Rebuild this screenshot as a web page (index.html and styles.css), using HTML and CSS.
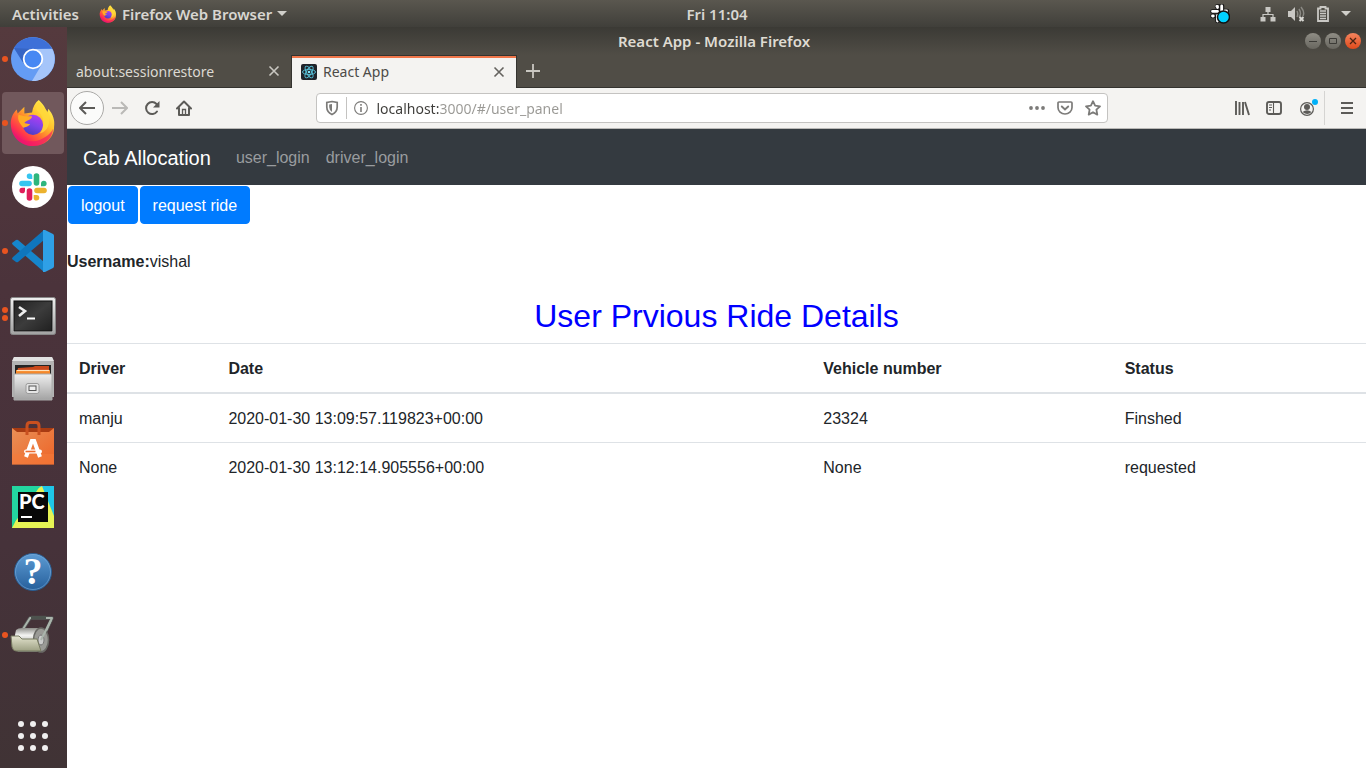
FILE: index.html
```
<!DOCTYPE html>
<html lang="en">
<head>
<meta charset="utf-8">
<meta name="viewport" content="width=device-width, initial-scale=1">
<title>React App</title>
<link rel="stylesheet" href="styles.css">
</head>
<body>
<svg class="defs" aria-hidden="true">
  <defs>
    <linearGradient id="flame" x1="0.85" y1="0.1" x2="0.2" y2="0.9"><stop offset="0" stop-color="#fff14f"/><stop offset=".35" stop-color="#ffc02b"/><stop offset=".62" stop-color="#ff7130"/><stop offset=".85" stop-color="#ff304f"/><stop offset="1" stop-color="#e3107a"/></linearGradient>
    <linearGradient id="globe" x1="0.7" y1="0" x2="0.3" y2="1"><stop offset="0" stop-color="#b33cf0"/><stop offset=".5" stop-color="#7a44e8"/><stop offset="1" stop-color="#4a3cc0"/></linearGradient>
    <linearGradient id="silver" x1="0" y1="0" x2="0" y2="1"><stop offset="0" stop-color="#efefef"/><stop offset="1" stop-color="#a2a2a2"/></linearGradient>
    <linearGradient id="screen" x1="0" y1="0" x2="1" y2="1"><stop offset="0" stop-color="#222"/><stop offset=".5" stop-color="#3c3c3c"/><stop offset="1" stop-color="#202020"/></linearGradient>
    <linearGradient id="bag" x1="0" y1="0" x2="1" y2="1"><stop offset="0" stop-color="#e99057"/><stop offset="1" stop-color="#ee6427"/></linearGradient>
    <linearGradient id="helpblue" x1="0" y1="0" x2="0" y2="1"><stop offset="0" stop-color="#5d9bd3"/><stop offset="1" stop-color="#265f9b"/></linearGradient>
    <linearGradient id="roller" x1="0" y1="0" x2="0" y2="1"><stop offset="0" stop-color="#8e8e8a"/><stop offset=".3" stop-color="#f4f4f2"/><stop offset="1" stop-color="#777772"/></linearGradient>
    <linearGradient id="folder" x1="0" y1="0" x2="0" y2="1"><stop offset="0" stop-color="#e4e4cf"/><stop offset="1" stop-color="#9da083"/></linearGradient>
    <symbol id="firefox" viewBox="0 0 48 50">
      <path d="M30 1c3 3 5 5 7 9l2 4 1-4c5 6 7 12 6 19 0 12-10 20-22 20S2 40 1 28c-1-7 2-13 6-17l1 4 7-7v7c3 0 5-1 8-1 1-6 3-10 7-13z" fill="url(#flame)"/>
      <path d="M2 31c3 9 12 14 23 13 9-1 17-7 20-13-1 11-10 18-21 18S4 42 2 31z" fill="#ef176b" opacity=".65"/>
      <circle cx="24" cy="27" r="10.5" fill="url(#globe)"/>
      <path d="M9 16c5 2 8 2 14 2 0 4-6 4-8 7 3 1 4 1 6 1-2 3-5 3-7 4-3-4-7-8-5-14z" fill="#ffad25"/>
      <path d="M28 12c8 5 9 17 3 24 8-2 12-10 9-22L30 3c-3 3-3 6-2 9z" fill="#ffd83b" opacity=".8"/>
    </symbol>
  </defs>
</svg>

<header class="topbar">
  <div class="topbar-left">
    <button class="top-button" type="button">Activities</button>
    <button class="top-button app-menu" type="button"><svg width="18" height="18"><use href="#firefox"/></svg>Firefox Web Browser<svg width="10" height="5" viewBox="0 0 10 5"><path d="M0 0h10L5 5z" fill="#d0cfca"/></svg></button>
  </div>
  <button class="top-button clock" type="button">Fri 11:04</button>
  <div class="tray">
    <svg class="tray-slack" width="20" height="20" viewBox="0 0 20 20"><g stroke="#151515" stroke-width="4.500" stroke-linecap="round"><path d="M7 2.500h1v4M12 2v5M2.500 7.500h6M2.500 12h1M7.500 12v5M14 7h3"/></g><g fill="none" stroke="#fff" stroke-width="2.800" stroke-linecap="round"><path d="M6.800 2.300h.6M7.500 2.500v1M11.700 2v4.500M2.500 7.300h5M2.500 12h.8M7.500 11.500v5.500M15 7h1.500"/></g><circle cx="13.500" cy="13" r="6" fill="#00d1ff" stroke="#111" stroke-width="1.500"/></svg>
    <svg width="16" height="16" viewBox="0 0 16 16"><path d="M5.500 1h5v5h-5zM0.500 11h5v4.500h-5zM10.500 11h5v4.500h-5z" fill="#c9c8c4"/><path d="M8 5v4M3 12V8.500h10V12" fill="none" stroke="#c9c8c4" stroke-width="1.200"/></svg>
    <svg width="17" height="16" viewBox="0 0 17 16"><path d="M0 5h3l4-4v14l-4-4H0z" fill="#c9c8c4"/><path d="M9 5q1.500 3 0 6M11 3q3 5 0 8M13 1q4 5 2 9" fill="none" stroke="#8a8983" stroke-width="1.500"/><path d="M11.500 11l4 4M15.500 11l-4 4" stroke="#d8d7d2" stroke-width="2"/></svg>
    <svg width="12" height="16" viewBox="0 0 12 16"><path d="M3.500 1h5v1.500h2.500v12.500H1V2.500h2.500z" fill="none" stroke="#c9c8c4" stroke-width="1.800"/><path d="M3 5h6M3 7.500h6M3 10h6M3 12.500h6" stroke="#c9c8c4" stroke-width="1.500"/></svg>
    <svg width="10" height="5" viewBox="0 0 10 5"><path d="M0 0h10L5 5z" fill="#d0cfca"/></svg>
  </div>
</header>

<div class="desktop">
  <nav class="dock" aria-label="Dock">
    <button class="dock-item running" type="button" aria-label="Chromium">
      <svg width="44" height="44" viewBox="0 0 44 44"><circle cx="22" cy="22" r="22" fill="#649cf4"/><path d="M3 11A22 22 0 0 1 41 11.500L22 12 13 27z" fill="#3d70d8"/><path d="M22 12h19.300A22 22 0 0 1 21 44l10-17z" fill="#a5c5fa"/><path d="M3 11l10 16 9-15z" fill="#3361bd" opacity=".7"/><circle cx="22" cy="22" r="9.300" fill="#4788f3" stroke="#fff" stroke-width="1.800"/></svg>
    </button>
    <button class="dock-item running active" type="button" aria-label="Firefox"><svg width="46" height="48"><use href="#firefox"/></svg></button>
    <button class="dock-item" type="button" aria-label="Slack">
      <svg width="42" height="42" viewBox="0 0 42 42"><circle cx="21" cy="21" r="21" fill="#fff"/><g fill="none" stroke-width="5.600" stroke-linecap="round"><path d="M10 17.500h7" stroke="#36c5f0"/><path d="M24.500 10v7" stroke="#2eb67d"/><path d="M25 24.500h7" stroke="#ecb22e"/><path d="M17.500 25v7" stroke="#e01e5a"/></g><path d="M20.300 13v-3.200a2.800 2.800 0 1 0-2.800 3.200z" fill="#36c5f0"/><path d="M29 20.300h3a2.800 2.800 0 1 0-3-3z" fill="#2eb67d"/><path d="M21.700 29v3a2.800 2.800 0 1 0 3-3z" fill="#ecb22e"/><path d="M13 21.700h-3a2.800 2.800 0 1 0 3 3z" fill="#e01e5a"/></svg>
    </button>
    <button class="dock-item running" type="button" aria-label="Visual Studio Code">
      <svg width="42" height="42" viewBox="0 0 42 42"><path d="M0 13l4-3q1-.7 2 0l26 22v10L1 15q-1-1-1-2z" fill="#1686cc"/><path d="M0 29l4 3q1 .7 2 0l26-22V0L1 27q-1 1-1 2z" fill="#0f76bd"/><path d="M31 0q1-.5 2 0l8 4q1 .5 1 2v30q0 1.500-1 2l-8 4q-1 .5-2 0z" fill="#2fa0e6"/></svg>
    </button>
    <button class="dock-item running twice" type="button" aria-label="Terminal">
      <svg width="46" height="40" viewBox="0 -2 46 40"><rect x=".5" y=".5" width="45" height="37" rx="2" fill="url(#silver)" stroke="#888"/><rect x="3.500" y="3.500" width="39" height="31" fill="#bbb" stroke="#ddd"/><rect x="4" y="4" width="38" height="30" fill="url(#screen)" stroke="#111"/><path d="M9 10l6 4-6 5" fill="none" stroke="#eee" stroke-width="2.600"/><path d="M17 21.500h8" stroke="#fff" stroke-width="2"/></svg>
    </button>
    <button class="dock-item" type="button" aria-label="Files">
      <svg width="42" height="44" viewBox="0 0 42 44"><path d="M2 0h38l2 5v35H0V5z" fill="#b4b4b4"/><path d="M2 0h38l2 4H0z" fill="#e2e2e2"/><path d="M3 8h36v12H3z" fill="#242424"/><path d="M6 11l15-1 2-1h14v12H4z" fill="#c9481b"/><path d="M4 13h34v6H4z" fill="#f5882a"/><path d="M5 13.500h32" stroke="#ffe2bb" stroke-width="1.200"/><path d="M2 17h38v26H2z" fill="url(#silver)" stroke="#aaa"/><rect x="14" y="26.500" width="13" height="10" rx="2" fill="#e5e5e5" stroke="#9a9a9a"/><rect x="17" y="29" width="7" height="4.500" fill="#eee" stroke="#555"/></svg>
    </button>
    <button class="dock-item" type="button" aria-label="Ubuntu Software">
      <svg width="42" height="44" viewBox="0 0 42 44"><path d="M0 7h42l-2 5H2z" fill="#a83b12"/><path d="M0 7l5 4h32l5-4v36.500H0z" fill="url(#bag)"/><path d="M0 33h42v10.500H0z" fill="#f47b3c" opacity=".55"/><path d="M15 14V5q0-3.500 3-3.500h6q3 0 3 3.500v9" fill="none" stroke="#c9501f" stroke-width="3"/><path d="M14 36l5.800-16h2.400L28 36" fill="none" stroke="#fff" stroke-width="4"/><rect x="12" y="28.500" width="18" height="4" rx="2" fill="#fff"/><rect x="13.500" y="29.700" width="10" height="1.600" fill="#ed6c30"/></svg>
    </button>
    <button class="dock-item" type="button" aria-label="PyCharm">
      <svg width="42" height="42" viewBox="0 0 42 42"><path d="M0 0h42v42H0z" fill="#21d789"/><path d="M26 0h16v30L32 14z" fill="#1fc7e8"/><path d="M0 42L18 7 30 0l12 30v12z" fill="#e6f354"/><path d="M0 0h28L8 30 0 38z" fill="#23d6a0"/><rect x="6" y="6" width="30" height="30" fill="#080808"/><text x="7" y="23" class="pc">PC</text><path d="M9 31h11" stroke="#fff" stroke-width="2"/></svg>
    </button>
    <button class="dock-item" type="button" aria-label="Help">
      <svg width="40" height="40" viewBox="0 0 40 40"><circle cx="20" cy="21" r="18.500" fill="url(#helpblue)" stroke="#2a5d91"/><circle cx="20" cy="21" r="17.500" fill="none" stroke="#79acdb" opacity=".6"/><text x="20" y="33" text-anchor="middle" class="help">?</text></svg>
    </button>
    <button class="dock-item running" type="button" aria-label="Archive roller">
      <svg width="46" height="40" viewBox="0 0 46 40"><path d="M13 14L20 3h22L31 27" fill="none" stroke="#555" stroke-width="3.500" stroke-linejoin="round"/><path d="M13 14L20 3h22L31 27" fill="none" stroke="#aab5ac" stroke-width="2" stroke-linejoin="round"/><path d="M21 2.500h15" stroke="#4d534e" stroke-width="3.500"/><path d="M6 15q2-2 6-2h18v24H8q-6-5-2-22z" fill="url(#roller)"/><ellipse cx="31" cy="25" rx="7.500" ry="12" fill="#9a9a96" stroke="#696965" stroke-width="1.500"/><ellipse cx="31" cy="25" rx="3" ry="5" fill="#ccc" stroke="#777"/><path d="M31 25L41 5" stroke="#aab5ac" stroke-width="2"/><path d="M1 21h8l3 3h15l4 12H6q-3 0-4-4z" fill="url(#folder)" stroke="#777a61"/></svg>
    </button>
    <button class="dock-item apps" type="button" aria-label="Show Applications">
      <svg width="32" height="32" viewBox="0 0 32 32" fill="#f0efef"><circle cx="4" cy="4" r="3"/><circle cx="16" cy="4" r="3"/><circle cx="28" cy="4" r="3"/><circle cx="4" cy="16" r="3"/><circle cx="16" cy="16" r="3"/><circle cx="28" cy="16" r="3"/><circle cx="4" cy="28" r="3"/><circle cx="16" cy="28" r="3"/><circle cx="28" cy="28" r="3"/></svg>
    </button>
  </nav>

  <div class="window">
    <div class="titlebar">
      <span class="title">React App - Mozilla Firefox</span>
      <div class="controls">
        <button class="control" type="button" aria-label="Minimize"><svg width="10" height="10" viewBox="0 0 10 10"><path d="M1 5.500h8" stroke="#3c3b37"/></svg></button>
        <button class="control" type="button" aria-label="Maximize"><svg width="10" height="10" viewBox="0 0 10 10"><path d="M1.500 2.500h7v5h-7z" fill="none" stroke="#3c3b37"/></svg></button>
        <button class="control close" type="button" aria-label="Close"><svg width="10" height="10" viewBox="0 0 10 10"><path d="M2 2l6 6M8 2L2 8" stroke="#4a2312" stroke-width="1.300"/></svg></button>
      </div>
    </div>
    <div class="tabs">
      <div class="tab">
        <button class="tab-label" type="button">about:sessionrestore</button>
        <button class="icon" type="button" aria-label="Close tab"><svg width="12" height="12" viewBox="0 0 12 12"><path d="M1.500 1.500l9 9M10.500 1.500l-9 9" stroke="#c9c7c1" stroke-width="1.600"/></svg></button>
      </div>
      <div class="tab selected">
        <svg width="16" height="16" viewBox="0 0 16 16"><rect width="16" height="16" rx="2" fill="#20232a"/><g fill="none" stroke="#58c4dc" stroke-width=".9"><ellipse cx="8" cy="8" rx="6.500" ry="2.600"/><ellipse cx="8" cy="8" rx="6.500" ry="2.600" transform="rotate(60 8 8)"/><ellipse cx="8" cy="8" rx="6.500" ry="2.600" transform="rotate(120 8 8)"/></g><circle cx="8" cy="8" r="1.300" fill="#7fe3f7"/></svg>
        <button class="tab-label" type="button">React App</button>
        <button class="icon" type="button" aria-label="Close tab"><svg width="12" height="12" viewBox="0 0 12 12"><path d="M1.500 1.500l9 9M10.500 1.500l-9 9" stroke="#65635f" stroke-width="1.600"/></svg></button>
      </div>
      <button class="icon new-tab" type="button" aria-label="New tab"><svg width="14" height="14" viewBox="0 0 14 14"><path d="M7 0v14M0 7h14" stroke="#c9c7c1" stroke-width="1.800"/></svg></button>
    </div>
    <div class="toolbar">
      <div class="nav-buttons">
        <button class="icon back" type="button" aria-label="Back"><svg width="16" height="14" viewBox="0 0 16 14"><path d="M7 1L1 7l6 6M1 7h15" fill="none" stroke="#5c5b58" stroke-width="2" stroke-linejoin="round"/></svg></button>
        <button class="icon" type="button" aria-label="Forward"><svg width="16" height="14" viewBox="0 0 16 14"><path d="M9 1l6 6-6 6M15 7H0" fill="none" stroke="#bab9b7" stroke-width="2"/></svg></button>
        <button class="icon" type="button" aria-label="Reload"><svg width="16" height="16" viewBox="0 0 16 16"><path d="M12.500 4A6 6 0 1 0 13 11.500" fill="none" stroke="#5c5b58" stroke-width="2" stroke-linecap="round"/><path d="M15.500 1v6.500H9z" fill="#5c5b58"/></svg></button>
        <button class="icon" type="button" aria-label="Home"><svg width="16" height="16" viewBox="0 0 16 16"><path d="M1 8.500l7-7 7 7M3 8v7h10V8" fill="none" stroke="#5c5b58" stroke-width="2" stroke-linecap="round" stroke-linejoin="round"/><path d="M6.500 14.500v-5h3v5" fill="none" stroke="#5c5b58" stroke-width="1.300"/></svg></button>
      </div>
      <div class="urlbar">
        <svg width="14" height="16" viewBox="0 0 14 16"><path d="M7 1.500l5.200 1V7q0 5-5.200 7.500Q1.800 12 1.800 7V2.500z" fill="none" stroke="#7c7b79" stroke-width="1.700"/><path d="M7 4v8Q4.200 10 4.200 7V4.500z" fill="#7c7b79"/></svg>
        <span class="rule"></span>
        <svg width="14" height="14" viewBox="0 0 14 14"><circle cx="7" cy="7" r="6.400" fill="none" stroke="#7c7b79" stroke-width="1.100"/><path d="M7 3v1.800M7 6v5" stroke="#7c7b79" stroke-width="1.600"/></svg>
        <input class="url" type="text" aria-label="Address" value="localhost:3000/#/user_panel">
        <button class="icon" type="button" aria-label="Page actions"><svg width="16" height="16" viewBox="0 0 16 16" fill="#7c7b79"><circle cx="2" cy="8" r="1.900"/><circle cx="8" cy="8" r="1.900"/><circle cx="14" cy="8" r="1.900"/></svg></button>
        <button class="icon" type="button" aria-label="Save to Pocket"><svg width="16" height="16" viewBox="0 0 16 16"><path d="M2 2h12q1 0 1 1v4.500a7 6.500 0 0 1-14 0V3q0-1 1-1z" fill="none" stroke="#7c7b79" stroke-width="1.700"/><path d="M4.800 6.500L8 9.500l3.200-3" fill="none" stroke="#7c7b79" stroke-width="1.900" stroke-linecap="round"/></svg></button>
        <button class="icon" type="button" aria-label="Bookmark"><svg width="16" height="16" viewBox="0 0 16 16"><path d="M8 1.200l2.100 4.500 4.900.6-3.600 3.400.9 4.900L8 12.200l-4.300 2.400.9-4.900L1 6.300l4.900-.6z" fill="none" stroke="#7c7b79" stroke-width="1.800" stroke-linejoin="round"/></svg></button>
      </div>
      <div class="tools">
        <button class="icon" type="button" aria-label="Library"><svg width="16" height="16" viewBox="0 0 16 16"><path d="M2 1v14M5.500 2v13M9 2v13M11 2l4 13" fill="none" stroke="#5c5b58" stroke-width="1.900"/></svg></button>
        <button class="icon" type="button" aria-label="Sidebars"><svg width="16" height="16" viewBox="0 0 16 16"><rect x="1" y="2" width="14" height="12" rx="2" fill="none" stroke="#5c5b58" stroke-width="1.900"/><path d="M7.500 2v12M3 5h3M3 7.500h3M3 10h2" stroke="#5c5b58" stroke-width="1.100"/></svg></button>
        <button class="icon account" type="button" aria-label="Account"><svg width="20" height="20" viewBox="0 0 20 20"><circle cx="9" cy="11" r="6.400" fill="none" stroke="#5c5b58" stroke-width="1.200"/><circle cx="9" cy="9" r="3" fill="#5c5b58"/><path d="M4.500 14q4.500-3.500 9 0-4 4-9 0z" fill="#5c5b58"/><circle cx="17" cy="4" r="3" fill="#00b0f8"/></svg></button>
        <span class="divider"></span>
        <button class="icon" type="button" aria-label="Menu"><svg width="12" height="14" viewBox="0 0 12 14"><path d="M0 2h12M0 7h12M0 12h12" stroke="#5c5b58" stroke-width="2"/></svg></button>
      </div>
    </div>

    <main class="page">
      <nav class="navbar">
        <a class="brand" href="#/">Cab Allocation</a>
        <a class="nav-link" href="#/user_login">user_login</a>
        <a class="nav-link" href="#/driver_login">driver_login</a>
      </nav>
      <div class="actions">
        <button class="btn" type="button">logout</button>
        <button class="btn" type="button">request ride</button>
      </div>
      <p class="username"><b>Username:</b>vishal</p>
      <h2 class="heading">User Prvious Ride Details</h2>
      <table class="rides">
        <colgroup><col class="col-driver"><col class="col-date"><col class="col-vehicle"><col></colgroup>
        <thead>
          <tr><th scope="col">Driver</th><th scope="col">Date</th><th scope="col">Vehicle number</th><th scope="col">Status</th></tr>
        </thead>
        <tbody>
          <tr><td>manju</td><td>2020-01-30 13:09:57.119823+00:00</td><td>23324</td><td>Finshed</td></tr>
          <tr><td>None</td><td>2020-01-30 13:12:14.905556+00:00</td><td>None</td><td>requested</td></tr>
        </tbody>
      </table>
    </main>
  </div>
</div>
</body>
</html>
```

FILE: styles.css
```
* { box-sizing: border-box; }

body {
  margin: 0;
  min-height: 100vh;
  display: flex;
  flex-direction: column;
  font-family: "Noto Sans", "Open Sans", sans-serif;
  font-size: 14px;
}

button {
  font: inherit;
  color: inherit;
  background: none;
  border: 0;
  padding: 0;
}

svg { display: block; flex: none; }
.defs { position: absolute; width: 0; height: 0; }

/* Top panel */
.topbar {
  display: grid;
  grid-template-columns: 19fr auto 17fr;
  align-items: center;
  height: 27px;
  padding: 0 15px 0 12px;
  color: #d8d6d1;
  font-size: 15px;
  font-weight: 600;
  line-height: 20px;
  background: linear-gradient(#5a574f, #403f3a);
}
.topbar-left { display: flex; gap: 20px; }
.app-menu { display: flex; align-items: center; gap: 5px; }
.tray {
  display: flex;
  justify-content: flex-end;
  align-items: center;
  gap: 12px;
}
.tray-slack { margin-right: 18px; }

.desktop { flex: 1; display: flex; }

/* Dock */
.dock {
  flex: none;
  width: 67px;
  display: flex;
  flex-direction: column;
  background: linear-gradient(#553a3e, #4b333b 35%, #46323a 70%, #403335);
}
.dock-item {
  position: relative;
  height: 64px;
  display: flex;
  align-items: center;
  justify-content: center;
  padding-right: 1px;
}
.dock-item.active {
  height: 62px;
  margin: 1px 3px 1px 2px;
  border-radius: 4px;
  background: #71585c;
}
.running::before {
  content: "";
  position: absolute;
  left: 2px;
  top: 50%;
  width: 6px;
  height: 6px;
  margin-top: -3px;
  border-radius: 50%;
  background: #e95420;
}
.active::before { left: 0; }
.twice::before { margin-top: -8px; box-shadow: 0 8px #e95420; }
.apps { margin-top: auto; }
.pc { font: 900 20px Lato, sans-serif; fill: #fff; }
.help { font: bold 38px "Liberation Serif", serif; fill: #fff; }

/* Browser window */
.window {
  flex: 1;
  min-width: 0;
  display: flex;
  flex-direction: column;
  background: #504d46;
}
.titlebar {
  display: grid;
  grid-template-columns: 1fr auto 1fr;
  align-items: center;
  height: 28px;
  padding-right: 5px;
  color: #dfdbd2;
  font-size: 15px;
  font-weight: 600;
  line-height: 20px;
  background: linear-gradient(#3b3a35, #504d46);
}
.title { grid-column: 2; }
.controls { display: flex; justify-content: flex-end; gap: 4px; }
.control {
  width: 16px;
  height: 16px;
  display: grid;
  place-items: center;
  border-radius: 50%;
  background: linear-gradient(#8f8d85, #68665f);
}
.control.close { background: linear-gradient(#f4845e, #df4a1b); }

.tabs {
  display: flex;
  height: 33px;
  color: #dcd9d2;
  border-bottom: 1px solid #34332f;
}
.tab {
  width: 224px;
  display: flex;
  align-items: center;
  gap: 6px;
  padding: 0 11px 0 9px;
}
.tab-label { flex: 1; text-align: left; white-space: nowrap; }
.tab.selected {
  width: 226px;
  margin-bottom: -1px;
  padding-bottom: 1px;
  color: #4c4b48;
  background: #f4f3f1;
  border: solid #34332f;
  border-width: 1px 1px 0;
  box-shadow: inset 0 2px #f0764a;
}
.icon { display: grid; place-items: center; }
.new-tab { padding: 0 9px; }

.toolbar {
  display: grid;
  grid-template-columns: 1fr 792px 1fr;
  align-items: center;
  height: 41px;
  padding: 0 13px 0 3px;
  background: #f4f3f1;
  border-bottom: 1px solid #b9b8b6;
}
.nav-buttons { display: flex; align-items: center; gap: 16px; }
.back {
  width: 34px;
  height: 34px;
  margin-right: -8px;
  border: 1px solid #aaa9a7;
  border-radius: 50%;
  background: #fbfbfa;
}
.urlbar {
  display: flex;
  align-items: center;
  gap: 12px;
  height: 30px;
  padding: 0 6px 0 8px;
  background: #fff;
  border: 1px solid #c4c3c1;
  border-radius: 4px;
}
.rule { width: 1px; height: 22px; margin: 0 -5px; background: #c4c3c1; }
.url {
  flex: 1;
  min-width: 0;
  height: 24px;
  margin-left: -3px;
  padding: 0;
  border: 0;
  outline: 0;
  font: inherit;
  color: #96958f;
  background: linear-gradient(90deg, #3d3c39 63px, #999894 63px);
  -webkit-background-clip: text;
  background-clip: text;
  -webkit-text-fill-color: transparent;
}
.tools {
  display: flex;
  justify-content: flex-end;
  align-items: center;
  gap: 16px;
}
.account { margin-right: -10px; }
.divider { width: 1px; height: 34px; background: #d5d4d2; }

/* Page content */
.page {
  flex: 1;
  background: #fff;
  color: #212529;
  font: 16px/24px "Liberation Sans", Arial, sans-serif;
}
.navbar {
  display: flex;
  align-items: center;
  gap: 16px;
  height: 56px;
  padding: 1px 16px 0;
  background: #343a40;
}
.navbar a { text-decoration: none; }
.brand { margin-right: 9px; color: #fff; font-size: 20px; }
.nav-link { color: #999c9f; }
.actions { display: flex; gap: 2px; padding: 1px; }
.btn {
  padding: 7px 12px 5px;
  color: #fff;
  background: #007bff;
  border: 1px solid #007bff;
  border-radius: 4px;
}
.username { margin: 25px 0 23px; }
.heading {
  margin: 0 0 8px;
  color: #00f;
  font-size: 32px;
  font-weight: 400;
  line-height: 38px;
  text-align: center;
}
.rides { width: 100%; border-collapse: collapse; }
.col-driver { width: 11.5%; }
.col-date { width: 45.8%; }
.col-vehicle { width: 23.2%; }
.rides th, .rides td {
  padding: 13px 12px 11px;
  text-align: left;
  border-top: 1px solid #dee2e6;
}
.rides thead th { border-bottom: 2px solid #dee2e6; }
```
